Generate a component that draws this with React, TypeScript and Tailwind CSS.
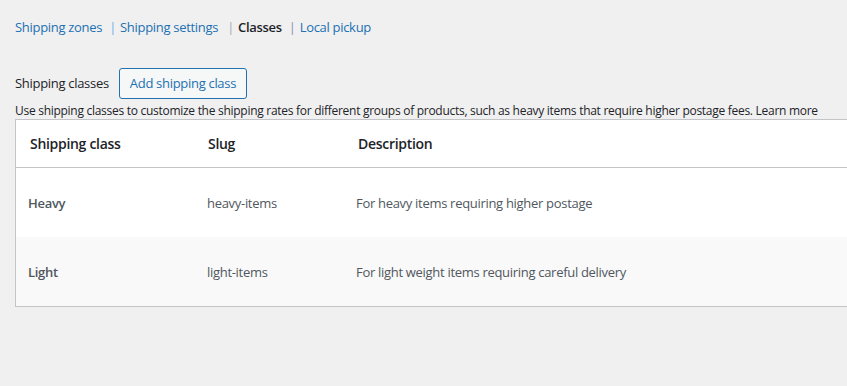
const font = { fontFamily: '"Open Sans", "Noto Sans", sans-serif' };

const tabs = [
  { label: "Shipping zones", current: false, sep: "" },
  { label: "Shipping settings", current: false, sep: "ml-[7px] mr-[4px] text-[#72aee6]" },
  { label: "Classes", current: true, sep: "ml-[9px] mr-[4px] text-[#a7aaad]" },
  { label: "Local pickup", current: false, sep: "ml-[7px] mr-[4px] text-[#8c8fb4]" },
];

const classes = [
  { name: "Heavy", slug: "heavy-items", description: "For heavy items requiring higher postage" },
  { name: "Light", slug: "light-items", description: "For light weight items requiring careful delivery" },
];

export default function App() {
  return (
    <div className="h-[386px] w-[847px] overflow-hidden bg-[#f0f0f1] text-[13px] tracking-[-0.3px] text-[#3c434a]" style={font}>
      <nav className="flex items-center pl-[15px] pt-[17px] leading-5">
        {tabs.map((t) => (
          <span key={t.label} className="flex items-center">
            {t.sep && <span className={t.sep}>|</span>}
            <span className={t.current ? "font-semibold text-[#1d2327]" : "text-[#2271b1]"}>{t.label}</span>
          </span>
        ))}
      </nav>

      <div className="mt-[31px] flex items-center pl-[15px]">
        <h2 className="text-[13px] text-[#1d2327]">Shipping classes</h2>
        <button className="ml-[10px] h-[31px] rounded-[3px] border border-[#2271b1] bg-[#f6f7f7] px-[10px] text-[13px] tracking-[-0.3px] text-[#2271b1]">
          Add shipping class
        </button>
      </div>

      <p className="mt-[3px] whitespace-nowrap pl-[15px] text-[12px] leading-[17px] tracking-[-0.28px] text-[#1d2327]">
        Use shipping classes to customize the shipping rates for different groups of products, such as heavy items that require higher postage fees. Learn more
      </p>

      <div className="ml-[15px] w-[850px] border border-[#c3c4c7] bg-white">
        <div className="grid h-[48px] grid-cols-[178px_150px_1fr] items-center border-b border-[#c3c4c7] pl-[14px] text-[14px] font-semibold text-[#1d2327]">
          <span>Shipping class</span>
          <span>Slug</span>
          <span>Description</span>
        </div>
        {classes.map((c, i) => (
          <div
            key={c.slug}
            className={`grid h-[69px] grid-cols-[179px_149px_1fr] items-center pl-[12px] pt-[2px] text-[#50575e] ${i % 2 ? "bg-[#f9f9f9]" : "bg-white"}`}
          >
            <span className="font-semibold">{c.name}</span>
            <span>{c.slug}</span>
            <span>{c.description}</span>
          </div>
        ))}
      </div>
    </div>
  );
}
